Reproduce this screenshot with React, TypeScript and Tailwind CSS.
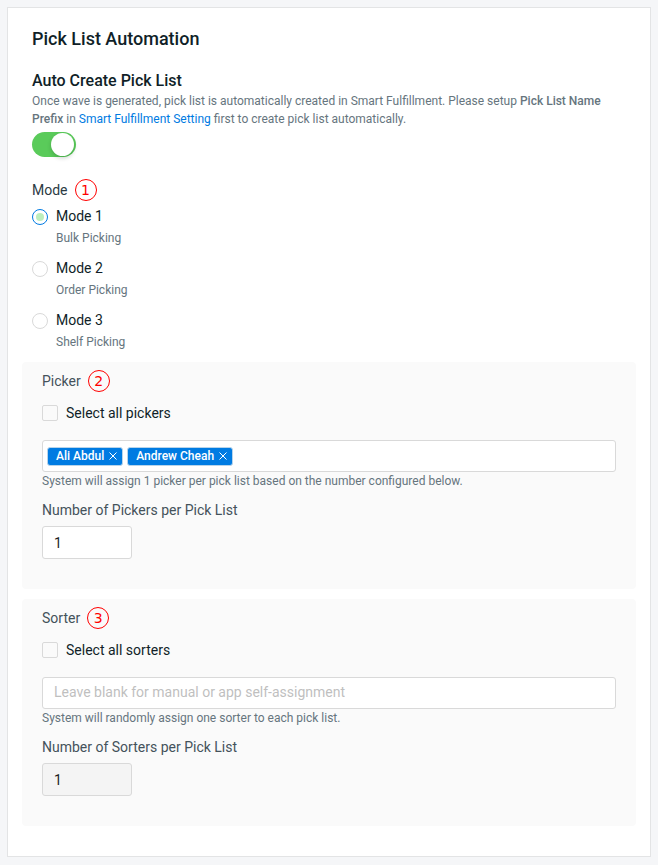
import clsx from 'clsx'
import { useState } from 'react'
import type { ReactNode } from 'react'

type Mode = {
  readonly id: string
  readonly label: string
  readonly description: string
}

type StepBadgeProps = {
  readonly step: number
}

type AssigneePanelProps = {
  readonly id: string
  readonly title: string
  readonly step: number
  readonly selectAllLabel: string
  readonly hint: string
  readonly countLabel: string
  readonly countDisabled?: boolean
  readonly children: ReactNode
}

const MODES: readonly Mode[] = [
  { id: 'mode-1', label: 'Mode 1', description: 'Bulk Picking' },
  { id: 'mode-2', label: 'Mode 2', description: 'Order Picking' },
  { id: 'mode-3', label: 'Mode 3', description: 'Shelf Picking' },
]

function StepBadge({ step }: StepBadgeProps) {
  return (
    <span className="flex size-[22px] items-center justify-center rounded-full border border-[#ff0000] font-['DejaVu_Sans',sans-serif] text-sm leading-5 text-[#ff0000]">
      {step}
    </span>
  )
}

function Toggle() {
  const [on, setOn] = useState(true)

  return (
    <button
      type="button"
      role="switch"
      aria-checked={on}
      aria-labelledby="auto-create"
      onClick={() => setOn(!on)}
      className={clsx(
        'mt-1 flex h-[25px] w-11 items-center rounded-full px-0.5',
        on ? 'justify-end bg-[#5acb5a]' : 'justify-start bg-[#bfbfbf]',
      )}
    >
      <span className="size-[23px] rounded-full bg-white shadow-[0_2px_4px_rgba(0,35,11,0.2)]" />
    </button>
  )
}

function AssigneePanel({
  id,
  title,
  step,
  selectAllLabel,
  hint,
  countLabel,
  countDisabled = false,
  children,
}: AssigneePanelProps) {
  return (
    <section className="rounded-sm bg-[#fafafa] px-5 pt-2 pb-[30px]">
      <h3 className="flex items-center gap-[7px] text-sm leading-[22px] text-[#44525b]">
        {title}
        <StepBadge step={step} />
      </h3>

      <label className="mt-2.5 flex items-center gap-2 text-sm leading-[22px] text-[#101f28]">
        <input
          type="checkbox"
          className="size-4 appearance-none rounded-xs border border-[#d9d9d9] checked:border-[#007be2] checked:bg-[#007be2]"
        />
        {selectAllLabel}
      </label>

      <div className="mt-4">{children}</div>
      <p className="text-xs leading-[18px] text-[#66757e]">{hint}</p>

      <label htmlFor={`${id}-count`} className="mt-2.5 block text-sm leading-5 text-[#44525b]">
        {countLabel}
      </label>
      <input
        id={`${id}-count`}
        type="number"
        min={1}
        defaultValue={1}
        disabled={countDisabled}
        className="mt-1.5 block h-[33px] w-[90px] rounded-[3px] border border-[#d9d9d9] bg-white px-[11px] text-sm text-[#1f1f1f] disabled:bg-[#f4f4f4]"
      />
    </section>
  )
}

function PickerSelect() {
  const [pickers, setPickers] = useState(['Ali Abdul', 'Andrew Cheah'])

  return (
    <div className="flex h-8 items-center gap-1 rounded-[3px] border border-[#d9d9d9] bg-white px-1">
      {pickers.map((name) => (
        <span
          key={name}
          className="flex h-[19px] shrink-0 items-center gap-[3px] rounded-[3px] border border-[#b8d4ea] bg-[#007be2] pr-[3px] pl-2 text-xs font-medium text-white"
        >
          {name}
          <button
            type="button"
            aria-label={`Remove ${name}`}
            onClick={() => setPickers(pickers.filter((p) => p !== name))}
          >
            <svg viewBox="0 0 12 12" className="size-3" fill="none" stroke="currentColor">
              <path d="M2.5 2.5 9.5 9.5M9.5 2.5 2.5 9.5" />
            </svg>
          </button>
        </span>
      ))}
      <input type="text" aria-label="Pickers" className="min-w-0 flex-1 text-sm outline-none" />
    </div>
  )
}

export default function App() {
  const [mode, setMode] = useState('mode-1')

  return (
    <div className="min-h-screen bg-[#f5f6f8] px-[7px] py-[7px] font-[Roboto,sans-serif]">
      <main className="border border-[#e3e4e5] bg-white px-3.5 pt-[19px] pb-[30px]">
        <div className="px-2.5">
          <h1 className="text-lg leading-6 font-medium text-[#101f28]">Pick List Automation</h1>

          <h2 id="auto-create" className="mt-[18px] text-base leading-[23px] font-medium text-[#101f28]">
            Auto Create Pick List
          </h2>
          <p className="text-xs leading-[18px] text-[#66757e]">
            Once wave is generated, pick list is automatically created in Smart Fulfillment. Please setup{' '}
            <strong className="font-medium">Pick List Name Prefix</strong> in{' '}
            <a href="#fulfillment" className="text-[#007be2]">
              Smart Fulfillment Setting
            </a>{' '}
            first to create pick list automatically.
          </p>
          <Toggle />

          <fieldset className="mt-[22px]">
            <legend className="flex items-center gap-[7px] text-sm leading-[22px] text-[#2b3a43]">
              Mode
              <StepBadge step={1} />
            </legend>
            <div className="flex flex-col gap-2 pt-1">
              {MODES.map(({ id, label, description }) => (
                <div key={id} className="grid grid-cols-[16px_1fr] items-end gap-x-2">
                  <input
                    id={id}
                    type="radio"
                    name="mode"
                    checked={mode === id}
                    onChange={() => setMode(id)}
                    aria-describedby={`${id}-description`}
                    className="mb-0.5 flex size-4 appearance-none items-center justify-center rounded-full border border-[#d9d9d9] bg-white before:size-2 before:rounded-full checked:border-[#007be2] checked:before:bg-[#bdeebd]"
                  />
                  <label htmlFor={id} className="text-sm leading-[22px] text-[#101f28]">
                    {label}
                  </label>
                  <p id={`${id}-description`} className="col-start-2 text-xs leading-[22px] text-[#66757e]">
                    {description}
                  </p>
                </div>
              ))}
            </div>
          </fieldset>
        </div>

        <div className="mt-[9px] flex flex-col gap-2.5">
          <AssigneePanel
            id="picker"
            title="Picker"
            step={2}
            selectAllLabel="Select all pickers"
            hint="System will assign 1 picker per pick list based on the number configured below."
            countLabel="Number of Pickers per Pick List"
          >
            <PickerSelect />
          </AssigneePanel>

          <AssigneePanel
            id="sorter"
            title="Sorter"
            step={3}
            selectAllLabel="Select all sorters"
            hint="System will randomly assign one sorter to each pick list."
            countLabel="Number of Sorters per Pick List"
            countDisabled
          >
            <input
              type="text"
              aria-label="Sorters"
              placeholder="Leave blank for manual or app self-assignment"
              className="block h-8 w-full rounded-[3px] border border-[#d9d9d9] bg-white px-[11px] pb-0.5 text-sm text-[#1f1f1f] placeholder:text-[#bfbfbf]"
            />
          </AssigneePanel>
        </div>
      </main>
    </div>
  )
}
